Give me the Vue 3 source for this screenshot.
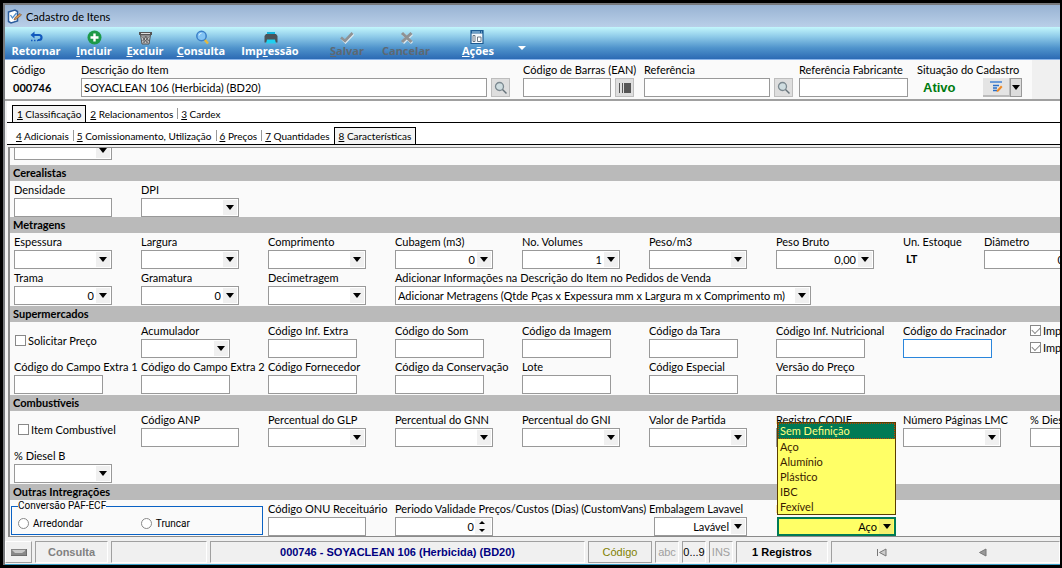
<script setup>
import { ref } from 'vue'

const tools = [
  { id: 'retornar', pre: 'Retornar', key: '', post: '' },
  { id: 'incluir', pre: '', key: 'I', post: 'ncluir' },
  { id: 'excluir', pre: '', key: 'E', post: 'xcluir' },
  { id: 'consulta', pre: '', key: 'C', post: 'onsulta' },
  { id: 'impressao', pre: 'Imp', key: 'r', post: 'essão' },
  { id: 'salvar', pre: '', key: 'S', post: 'alvar', off: true },
  { id: 'cancelar', pre: 'Cancelar', key: '', post: '', off: true },
  { id: 'acoes', pre: '', key: 'A', post: 'ções' }
]

const mainTabs = [
  { n: '1', t: 'Classificação', on: true },
  { n: '2', t: 'Relacionamentos' },
  { n: '3', t: 'Cardex' }
]
const subTabs = [
  { n: '4', t: 'Adicionais' },
  { n: '5', t: 'Comissionamento, Utilização' },
  { n: '6', t: 'Preços' },
  { n: '7', t: 'Quantidades' },
  { n: '8', t: 'Características', on: true }
]

const text = (label, size = 'm', extra = {}) => ({ kind: 'text', label, size, value: '', ...extra })
const combo = (label, value = '', size = 'l', extra = {}) => ({ kind: 'combo', label, size, value, ...extra })

const sections = [
  {
    title: 'Cerealistas',
    rows: [[text('Densidade', 'l'), combo('DPI')]]
  },
  {
    title: 'Metragens',
    rows: [
      [
        combo('Espessura'), combo('Largura'), combo('Comprimento'), combo('Cubagem (m3)', '0'),
        combo('No. Volumes', '1'), combo('Peso/m3'), combo('Peso Bruto', '0,00'),
        { kind: 'output', label: 'Un. Estoque', value: 'LT' }, combo('Diâmetro', '0')
      ],
      [
        combo('Trama', '0'), combo('Gramatura', '0'), combo('Decimetragem'),
        combo('Adicionar Informações na Descrição do Item no Pedidos de Venda',
          'Adicionar Metragens (Qtde Pças x Expessura mm x Largura m x Comprimento m)', 'wide')
      ]
    ]
  },
  {
    title: 'Supermercados',
    rows: [
      [
        { kind: 'check', label: 'Solicitar Preço' }, combo('Acumulador', '', 'm'),
        text('Código Inf. Extra'), text('Código do Som'), text('Código da Imagem'),
        text('Código da Tara'), text('Código Inf. Nutricional'),
        text('Código do Fracinador', 'm', { current: true }),
        { kind: 'checks', labels: ['Imprime Data', 'Imprime Validade'] }
      ],
      [
        text('Código do Campo Extra 1'), text('Código do Campo Extra 2'), text('Código Fornecedor'),
        text('Código da Conservação'), text('Lote'), text('Código Especial'), text('Versão do Preço')
      ]
    ]
  },
  {
    title: 'Combustíveis',
    rows: [
      [
        { kind: 'check', label: 'Item Combustível', indent: true }, text('Código ANP', 'l'),
        combo('Percentual do GLP'), combo('Percentual do GNN'), combo('Percentual do GNI'),
        combo('Valor de Partida'), combo('Registro CODIF'), combo('Número Páginas LMC'), combo('% Diesel A')
      ],
      [combo('% Diesel B')]
    ]
  }
]

const materials = ['Sem Definição', 'Aço', 'Alumínio', 'Plástico', 'IBC', 'Fexível']
const hovered = ref(0)
const material = ref('Aço')
</script>

<template>
  <div class="window">
    <header class="titlebar">
      <svg width="15" height="15" viewBox="0 0 15 15" aria-hidden="true">
        <path d="M1.500 3 8 1l2.500 1.500V12L4 14l-2.500-1.500z" fill="#fff" stroke="#2b5c9c" stroke-width="1.500" />
        <path d="M3.500 6l2 3 4-5" fill="none" stroke="#4f8cc9" stroke-width="1.300" />
        <path d="M7 11l1-2.500 5-4 1.500 1.500-5 4z" fill="#d99552" stroke="#6b4a2c" stroke-width=".6" />
      </svg>
      <span>Cadastro de Itens</span>
    </header>

    <nav class="toolbar" aria-label="Ações do cadastro">
      <button v-for="t in tools" :key="t.id" type="button" class="tool" :class="[t.id, { off: t.off }]" :disabled="t.off">
        <svg width="16" height="16" viewBox="0 0 16 16" aria-hidden="true">
          <template v-if="t.id === 'retornar'">
            <path d="M5 6h6a2.500 2.500 0 0 1 0 5H10" fill="none" stroke="#1259bd" stroke-width="2.200" />
            <path d="M2.500 6l4-3.500v7z" fill="#1259bd" />
            <path d="M3 11.500h1.500M6 11.500h1.500M9 11.500h1" stroke="#1259bd" stroke-width="1.500" />
          </template>
          <template v-else-if="t.id === 'incluir'">
            <circle cx="8.500" cy="8.500" r="7" fill="#1d9a48" />
            <path d="M8.500 4.500v8M4.500 8.500h8" stroke="#fff" stroke-width="2.400" />
          </template>
          <template v-else-if="t.id === 'excluir'">
            <path d="M2 3h13v3H2z" fill="#555" />
            <path d="M3.500 6h10l-1.500 9H5z" fill="#c6c8ca" stroke="#555" />
            <path d="M4 4.500h9" stroke="#ddd" />
            <path d="M4.500 7l6 7M8 7l4 5M12.500 7l-6 7M9.500 7l-4 5M7 7v7M10 7v7" stroke="#555" stroke-width=".8" />
          </template>
          <template v-else-if="t.id === 'consulta'">
            <path d="M11.500 10.500l3.500 4" stroke="#e6b83a" stroke-width="2.400" />
            <circle cx="8.500" cy="7" r="4.700" fill="#83c4f4" stroke="#3a7fc8" stroke-width="1.500" />
            <path d="M6 6.500A2.500 2.500 0 0 1 8.500 4.300" fill="none" stroke="#d6f0ff" />
          </template>
          <template v-else-if="t.id === 'impressao'">
            <path d="M5 3h8v3H5z" fill="#12b5dd" />
            <path d="M4 5h10l1.500 2v6.500h-13V7z" fill="#4b5358" />
            <path d="M5 10.500h8l1 4H4z" fill="#1fd0f0" />
          </template>
          <template v-else-if="t.id === 'salvar'">
            <path d="M3 10l3.500 3.500L14.500 5" fill="none" stroke="#e4eef5" stroke-width="2" />
            <path d="M2 8.500l4 3.500L13.500 4" fill="none" stroke="#8f9294" stroke-width="2.600" />
          </template>
          <template v-else-if="t.id === 'cancelar'">
            <path d="M5 5l9 9M14 5l-9 9" stroke="#dde8f0" stroke-width="3" />
            <path d="M4 4l9.500 9M13.500 4L4 13" stroke="#8f9294" stroke-width="3" />
          </template>
          <template v-else>
            <path d="M1 1.500h12v13H1z" fill="#f4f9fd" stroke="#1d5c94" stroke-width="1.200" />
            <path d="M1 2h12v2.500H1z" fill="#1d5c94" />
            <path d="M2 3h8M11 3h1" stroke="#b8dcf5" />
            <path d="M3 6.500h2v6H3zM7.500 8h3.500v4.500H7.500z" fill="#fff" stroke="#5b6a77" stroke-width=".9" />
          </template>
        </svg>
        <span>{{ t.pre }}<u>{{ t.key }}</u>{{ t.post }}</span>
      </button>
      <button type="button" class="more" aria-label="Mais ações"></button>
    </nav>

    <section class="head">
      <div class="h-code"><span>Código</span><output>000746</output></div>
      <div class="h-desc">
        <label for="desc">Descrição do Item</label>
        <div class="pair">
          <input id="desc" type="text" value="SOYACLEAN 106 (Herbicida) (BD20)">
          <button type="button" class="sq" aria-label="Buscar descrição">
            <svg width="14" height="14" viewBox="0 0 14 14"><circle cx="5.500" cy="5.500" r="4" fill="#cfdde0" stroke="#7c8990" stroke-width="1.300" /><path d="M8.500 8.500l4 4" stroke="#66737a" stroke-width="1.500" /></svg>
          </button>
        </div>
      </div>
      <div class="h-ean">
        <label for="ean">Código de Barras (EAN)</label>
        <div class="pair">
          <input id="ean" type="text">
          <button type="button" class="sq" aria-label="Código de barras">
            <svg width="14" height="14" viewBox="0 0 14 14"><path d="M1.500 2v10M4.500 2v10" stroke="#555" /><path d="M6 2h7v10H6z" fill="#555" /></svg>
          </button>
        </div>
      </div>
      <div class="h-ref">
        <label for="ref">Referência</label>
        <div class="pair">
          <input id="ref" type="text">
          <button type="button" class="sq" aria-label="Buscar referência">
            <svg width="14" height="14" viewBox="0 0 14 14"><circle cx="5.500" cy="5.500" r="4" fill="#cfdde0" stroke="#7c8990" stroke-width="1.300" /><path d="M8.500 8.500l4 4" stroke="#66737a" stroke-width="1.500" /></svg>
          </button>
        </div>
      </div>
      <div class="h-fab">
        <label for="fab">Referência Fabricante</label>
        <div class="pair"><input id="fab" type="text"></div>
      </div>
      <div class="h-sit">
        <span>Situação do Cadastro</span>
        <div class="pair">
          <output class="active-state">Ativo</output>
          <button type="button" class="edit" aria-label="Alterar situação">
            <svg width="14" height="14" viewBox="0 0 14 14"><path d="M1 2h12" stroke="#6c9bd8" stroke-width="2" /><path d="M4 5.500h6M4 8h4M4 10.500h4" stroke="#2a6fc9" stroke-width="1.500" /><path d="M7.500 12l.5-2 4-4.500 1.500 1.500-4 4.500z" fill="#f08a24" /></svg>
          </button>
          <button type="button" class="drop" aria-label="Opções da situação"></button>
        </div>
      </div>
      <div class="h-end"></div>
    </section>

    <nav class="tabs" aria-label="Seções">
      <button v-for="t in mainTabs" :key="t.n" type="button" :class="{ on: t.on }"><u>{{ t.n }}</u> {{ t.t }}</button>
    </nav>
    <nav class="tabs sub" aria-label="Subseções">
      <button v-for="t in subTabs" :key="t.n" type="button" :class="{ on: t.on }"><u>{{ t.n }}</u> {{ t.t }}</button>
    </nav>

    <main class="panel">
      <div class="scrolled">
        <span class="combo l"><select aria-label="Opção anterior"><option></option></select></span>
      </div>

      <section v-for="(s, si) in sections" :key="s.title" :class="{ gap: s.rows.length > 1 }">
        <h2>{{ s.title }}</h2>
        <div v-for="(r, ri) in s.rows" :key="ri" class="row">
          <div v-for="(f, fi) in r" :key="fi" class="cell" :class="['k-' + f.kind, { long: f.size === 'wide', indent: f.indent }]">
            <template v-if="f.kind === 'check'">
              <label class="tick"><input type="checkbox"><span>{{ f.label }}</span></label>
            </template>
            <template v-else-if="f.kind === 'checks'">
              <label v-for="l in f.labels" :key="l" class="tick"><input type="checkbox" checked disabled><span>{{ l }}</span></label>
            </template>
            <template v-else-if="f.kind === 'output'">
              <span class="cap">{{ f.label }}</span><output>{{ f.value }}</output>
            </template>
            <template v-else>
              <label class="cap" :for="`f${si}-${ri}-${fi}`">{{ f.label }}</label>
              <span v-if="f.kind === 'combo'" class="combo" :class="f.size">
                <select :id="`f${si}-${ri}-${fi}`"><option>{{ f.value }}</option></select>
              </span>
              <input v-else :id="`f${si}-${ri}-${fi}`" type="text" :class="[f.size, { current: f.current }]">
            </template>
          </div>
        </div>
      </section>

      <section>
        <h2>Outras Intregrações</h2>
        <div class="row">
          <fieldset>
            <legend>Conversão PAF-ECF</legend>
            <label class="tick"><input type="radio" name="paf"><span>Arredondar</span></label>
            <label class="tick"><input type="radio" name="paf"><span>Truncar</span></label>
          </fieldset>
          <div class="cell">
            <label class="cap" for="onu">Código ONU Receituário</label>
            <input id="onu" type="text" class="l">
          </div>
          <div class="cell double">
            <label class="cap" for="per">Periodo Validade Preços/Custos (Dias) (CustomVans)</label>
            <span class="spin l"><input id="per" type="text" value="0"><i></i></span>
          </div>
          <div class="cell">
            <label class="cap" for="emb">Embalagem Lavavel</label>
            <span class="combo pack"><select id="emb"><option>Lavável</option></select></span>
          </div>
          <div class="cell">
            <label class="cap" for="mat">Embalagem do Material</label>
            <span class="combo open">
              <select id="mat" v-model="material"><option v-for="m in materials" :key="m">{{ m }}</option></select>
            </span>
            <ul class="list" role="listbox" aria-label="Embalagem do Material">
              <li v-for="(m, i) in materials" :key="m" role="option" :aria-selected="i === hovered" :class="{ hot: i === hovered }"
                  @mouseenter="hovered = i" @click="material = m">{{ m }}</li>
            </ul>
          </div>
        </div>
      </section>
    </main>

    <footer class="status">
      <span class="flag"><svg width="16" height="7" viewBox="0 0 16 7" aria-hidden="true"><path d="M0 0h16v7H0z" fill="#888" /><path d="M1 1h13v1l-3 2H4z" fill="#c8c8c8" /><path d="M0 7h16V0" fill="none" stroke="#555" /></svg></span>
      <span class="mode">Consulta</span>
      <span class="blank"></span>
      <span class="record">000746 - SOYACLEAN 106 (Herbicida) (BD20)</span>
      <button type="button" class="code">Código</button>
      <span class="key dim">abc</span>
      <span class="key">0...9</span>
      <span class="key dim">INS</span>
      <span class="count">1 Registros</span>
      <span class="pager">
        <button type="button" aria-label="Primeiro"><svg width="12" height="9" viewBox="0 0 12 9"><path d="M1.500 1v7" stroke="#777" /><path d="M10 1v7L3.500 4.500z" fill="#ccc" stroke="#777" /></svg></button>
        <button type="button" aria-label="Anterior"><svg width="12" height="9" viewBox="0 0 12 9"><path d="M9 1v7L2.500 4.500z" fill="#999" stroke="#777" /></svg></button>
      </span>
    </footer>
  </div>
</template>

<style>
body {
  background: #000;
}
</style>

<style scoped>
* {
  box-sizing: border-box;
}
.window {
  display: flex;
  flex-direction: column;
  min-height: 100vh;
  overflow: hidden;
  border: solid #000;
  border-width: 3px 2px 3px 3px;
  background: #f0f0f0;
  color: #000;
  font: 11px/15px Lato, "Open Sans", sans-serif;
  box-shadow: inset 2px 2px 0 #77797c, inset 0 -1px 0 #3aa0c8;
}
button, input, select {
  margin: 0;
  font: inherit;
  color: inherit;
  border-radius: 0;
}
button {
  padding: 0;
  border: 0;
  background: none;
}
output {
  font-weight: 700;
}
.titlebar {
  display: flex;
  align-items: center;
  gap: 4px;
  height: 22px;
  margin: 2px 0 0 2px;
  padding-left: 2px;
  background: linear-gradient(#98b3d3, #b9cfe8);
}
.toolbar {
  display: flex;
  height: 33px;
  margin-left: 2px;
  padding-left: 2px;
  background: linear-gradient(#c3f6fc, #8fcbe9 30%, #5094cc 65%, #2c6ab4);
  border-bottom: 1px solid #8db6ea;
}
.tool {
  display: flex;
  flex-direction: column;
  align-items: center;
  flex: none;
  padding-top: 2px;
  color: #fff;
  font: 700 11px/12px "Open Sans", "Noto Sans", sans-serif;
}
.tool.off {
  color: #5d6872;
}
.retornar { width: 58px; }
.incluir { width: 58px; }
.excluir { width: 44px; }
.consulta { width: 68px; }
.impressao { width: 70px; }
.salvar { width: 84px; }
.cancelar { width: 34px; }
.acoes { width: 110px; }
.more {
  align-self: center;
  margin: 10px 0 0 -15px;
  border: solid transparent;
  border-width: 4px 4px 0;
  border-top-color: #fff;
}
.head {
  display: flex;
  height: 41px;
  margin-left: 2px;
  padding: 2px 0 0 6px;
  background: #fafafa;
  border-bottom: 2px solid #a0a0a0;
}
.head > div {
  display: flex;
  flex-direction: column;
  flex: none;
  white-space: nowrap;
}
.head label, .head span {
  height: 16px;
}
.head output {
  line-height: 19px;
  padding-left: 2px;
}
.head .pair {
  display: flex;
  height: 19px;
}
.head input {
  flex: 1;
  min-width: 0;
  height: 19px;
}
.head .h-code { width: 70px; }
.head .h-desc { flex: 1; margin-right: 13px; }
.head .h-ean { width: 111px; margin-right: 10px; }
.head .h-ref { width: 149px; margin-right: 6px; }
.head .h-fab { width: 109px; margin-right: 9px; }
.head .h-sit { width: 105px; margin-right: 10px; }
.head .h-end { width: 28px; margin-top: -2px; background: #f0f0f0; }
input[type="text"], select {
  height: 19px;
  padding: 0 2px;
  border: 1px solid #999;
  background: #fff;
  outline: 0;
}
.sq {
  display: grid;
  place-items: center;
  width: 19px;
  height: 19px;
  margin-left: 4px;
  border: 1px solid #bdbdbd;
  background: #dedede;
}
.head .active-state {
  flex: 1;
  padding-left: 6px;
  color: #007a10;
  font: 700 13px/19px "Liberation Sans", sans-serif;
}
.edit {
  display: grid;
  place-items: center;
  width: 27px;
  border: 1px solid #bbb;
  border-width: 0 1px 2px 0;
  background: #e4e4e4;
}
.drop {
  display: grid;
  place-items: center;
  width: 12px;
  background: #dcdcdc;
  border: 1px solid #999;
}
.drop::after, .combo::after {
  content: "";
  border: solid transparent;
  border-width: 5px 4px 0;
  border-top-color: #000;
}
.tabs {
  display: flex;
  align-items: flex-end;
  height: 22px;
  margin-left: 4px;
  padding-left: 5px;
  background: #fff;
  border-bottom: 1px solid #000;
  font: 10px/14px Lato, "Liberation Sans", sans-serif;
}
.tabs button {
  height: 17px;
  padding: 0 4px;
  white-space: nowrap;
}
.tabs button + button:not(.on) {
  background: linear-gradient(#999, #999) left center / 1px 11px no-repeat;
}
.tabs .on {
  border: 1px solid #000;
  border-bottom: 0;
  background: #f4f4f4;
}
.tabs .on + button:not(.on) {
  background: none;
}
.panel {
  flex: 1;
  margin: 2px 0 4px 5px;
  border: solid #8a8a8a;
  border-width: 1px 0 1px 2px;
  background: #fafafa;
  overflow: hidden;
}
.scrolled {
  display: flex;
  align-items: flex-end;
  height: 17px;
  padding: 0 0 5px 4px;
  overflow: hidden;
}
.gap {
  padding-bottom: 1px;
}
h2 {
  height: 16px;
  margin: 0;
  padding-left: 3px;
  background: #bababa;
  font-size: 11px;
  line-height: 15px;
}
.row {
  display: flex;
  height: 36px;
  padding-left: 4px;
}
.cell {
  position: relative;
  display: flex;
  flex-direction: column;
  flex: none;
  width: 127px;
}
.cell.long {
  width: 420px;
}
.k-output.cell {
  width: 81px;
}
.k-output output {
  padding: 1px 3px;
}
.cell.double {
  width: 254px;
}
.cap {
  height: 17px;
  padding-top: 1px;
  white-space: nowrap;
}
.l { width: 98px; }
.m { width: 89px; }
.cell input.current {
  border: 1px solid #2a86dc;
}
.combo {
  position: relative;
  display: grid;
  flex: none;
  height: 19px;
}
.combo.wide { width: 416px; }
.combo.pack { width: 93px; margin-left: 5px; }
.combo select {
  appearance: none;
  padding-right: 17px;
  text-align-last: right;
  background: linear-gradient(#f0f0f0, #f0f0f0) right 1px center / 14px 15px no-repeat #fff;
}
.combo.wide select {
  text-align-last: left;
}
.combo::after {
  position: absolute;
  right: 5px;
  top: 7px;
  pointer-events: none;
}
.tick {
  display: flex;
  align-items: center;
  gap: 3px;
  height: 17px;
  white-space: nowrap;
}
.tick input {
  appearance: none;
  display: grid;
  place-items: center;
  width: 11px;
  height: 11px;
  border: 1px solid #888;
  background: #fff;
}
.tick input[type="radio"] {
  border-radius: 50%;
}
.tick input:checked::after {
  content: "";
  width: 7px;
  height: 4px;
  margin-top: -2px;
  border: solid #888;
  border-width: 0 0 1px 1px;
  rotate: -45deg;
}
.k-check {
  padding: 10px 0 0 1px;
}
.k-check.indent {
  padding-left: 4px;
}
.k-check .tick, .k-checks .tick {
  gap: 2px;
}
fieldset {
  display: flex;
  flex: none;
  gap: 58px;
  width: 252px;
  height: 35px;
  margin: 0 5px 0 -3px;
  padding: 3px 6px 0;
  border: 1px solid #0a62c4;
  font: 10px/15px Roboto, "Liberation Sans", sans-serif;
}
legend {
  padding: 0;
  line-height: 12px;
}
fieldset .tick {
  gap: 4px;
}
.spin {
  display: grid;
  grid-template-columns: 1fr 18px;
  height: 19px;
  border: 1px solid #999;
  background: #fff;
}
.spin input[type="text"] {
  min-width: 0;
  height: 17px;
  padding: 0;
  border: 0;
  text-align: right;
}
.spin i {
  position: relative;
  margin: 1px;
  background: #f4f4f4;
}
.spin i::before, .spin i::after {
  content: "";
  position: absolute;
  left: 4px;
  border: solid transparent;
}
.spin i::before {
  top: 2px;
  border-width: 0 3px 3px;
  border-bottom-color: #000;
}
.spin i::after {
  bottom: 2px;
  border-width: 3px 3px 0;
  border-top-color: #000;
}
.combo.open {
  width: 119px;
  margin-left: 1px;
}
.combo.open select {
  border: 2px solid #007a55;
  background: linear-gradient(#f4f070, #f4f070) right 1px center / 14px 15px no-repeat #ffff66;
}
.list {
  position: absolute;
  left: 1px;
  bottom: 21px;
  width: 119px;
  margin: 0;
  padding: 0;
  list-style: none;
  border: 1px solid #5a3d00;
  background: #ffff66;
  color: #3a1c00;
}
.list li {
  height: 15px;
  padding-left: 2px;
}
.list li.hot {
  height: 16px;
  padding-left: 1px;
  border: 1px dotted #c04000;
  background: #007a55;
  color: #ffff80;
  line-height: 14px;
}
.status {
  display: flex;
  gap: 3px;
  height: 22px;
  margin: 0 0 2px 2px;
  font: 11px/20px "Liberation Sans", sans-serif;
  text-align: center;
}
.status > * {
  flex: none;
  border: 1px solid;
  border-color: #a0a0a0 #fff #fff #a0a0a0;
  white-space: nowrap;
}
.status .flag {
  display: grid;
  place-items: center;
  width: 27px;
  border-color: #fff #a0a0a0 #a0a0a0 #fff;
}
.status .mode { width: 73px; color: #808080; font-weight: 700; }
.status .blank { width: 96px; }
.status .record { flex: 1; color: #000080; font-weight: 700; }
.status .code { width: 64px; color: #808000; border-color: #a0a0a0; }
.status .key { width: 24px; }
.status .dim { color: #a0a0a0; }
.status .count { width: 92px; font-weight: 700; color: #000; }
.status .pager {
  display: flex;
  justify-content: space-around;
  width: 229px;
  padding-right: 26px;
}
.pager button {
  display: grid;
  place-items: center;
}
</style>
